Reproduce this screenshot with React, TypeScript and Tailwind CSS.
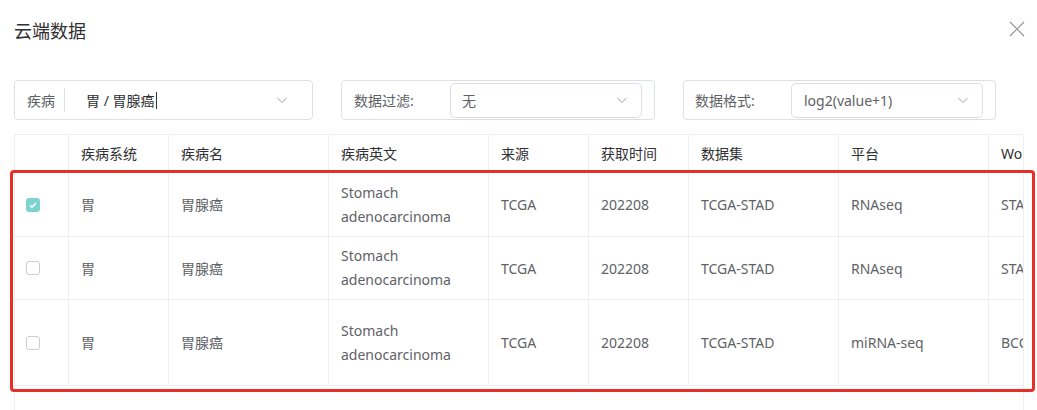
import React from 'react';

const FONT = { fontFamily: '"Noto Sans", "Noto Sans CJK SC", sans-serif' };

type Row = {
  checked: boolean;
  system: string;
  name: string;
  en: string[];
  source: string;
  time: string;
  dataset: string;
  platform: string;
  wo: string;
  h: string;
};

const ROWS: Row[] = [
  { checked: true, system: '胃', name: '胃腺癌', en: ['Stomach', 'adenocarcinoma'], source: 'TCGA', time: '202208', dataset: 'TCGA-STAD', platform: 'RNAseq', wo: 'STAD', h: 'h-[64px]' },
  { checked: false, system: '胃', name: '胃腺癌', en: ['Stomach', 'adenocarcinoma'], source: 'TCGA', time: '202208', dataset: 'TCGA-STAD', platform: 'RNAseq', wo: 'STAD', h: 'h-[63px]' },
  { checked: false, system: '胃', name: '胃腺癌', en: ['Stomach', 'adenocarcinoma'], source: 'TCGA', time: '202208', dataset: 'TCGA-STAD', platform: 'miRNA-seq', wo: 'BCGSC', h: 'h-[86px]' },
];

function Chevron() {
  return (
    <svg width="12" height="12" viewBox="0 0 12 12" fill="none" className="shrink-0">
      <path d="M1.5 4l4.5 4.5L10.5 4" stroke="#c0c4cc" strokeWidth="1.1" />
    </svg>
  );
}

function Checkbox({ checked }: { checked: boolean }) {
  if (checked) {
    return (
      <div className="w-[14px] h-[14px] rounded-[3px] bg-[#7dd3cf] flex items-center justify-center">
        <svg width="10" height="10" viewBox="0 0 10 10" fill="none">
          <path d="M2 5.2l2 2 4-4.2" stroke="#fff" strokeWidth="1.6" />
        </svg>
      </div>
    );
  }
  return <div className="w-[14px] h-[14px] rounded-[3px] border border-[#c8ccd4] bg-white" />;
}

const COLS = ['w-[54px]', 'w-[100px]', 'w-[160px]', 'w-[160px]', 'w-[100px]', 'w-[100px]', 'w-[150px]', 'w-[150px]', 'w-[150px]'];

function Cell({ w, children, last, first }: { w: string; children?: React.ReactNode; last?: boolean; first?: boolean }) {
  return (
    <div
      className={`${w} shrink-0 h-full flex items-center ${first ? 'pl-[11px]' : 'pl-[12px]'} ${last ? '' : 'border-r border-[#ebeef5]'}`}
    >
      {children}
    </div>
  );
}

export default function App() {
  return (
    <div className="relative w-[1037px] h-[410px] bg-white overflow-hidden" style={FONT}>
      {/* header */}
      <div className="flex items-center justify-between pl-[14px] pr-[12px] pt-[17px] h-[44px]">
        <span className="text-[18px] leading-[24px] text-[#303133]">云端数据</span>
        <svg width="16" height="16" viewBox="0 0 16 16" fill="none" className="-mt-[4px]">
          <path d="M1 1l14 14M15 1L1 15" stroke="#909399" strokeWidth="1.2" />
        </svg>
      </div>

      {/* filters */}
      <div className="flex pl-[14px] mt-[36px] gap-[28px] text-[14px]">
        <div className="w-[299px] h-[40px] border border-[#dcdfe6] rounded-[4px] flex items-center pl-[12px] pr-[24px]">
          <span className="text-[#606266]">疾病</span>
          <div className="w-px h-[24px] bg-[#dcdfe6] ml-[9px]" />
          <span className="ml-[21px] text-[#303133]">胃 / 胃腺癌</span>
          <span className="w-px h-[17px] bg-[#303133] ml-[1px]" />
          <div className="ml-auto"><Chevron /></div>
        </div>
        <div className="w-[314px] h-[40px] border border-[#dcdfe6] rounded-[4px] flex items-center pl-[12px] pr-[12px]">
          <span className="text-[#606266] w-[96px]">数据过滤:</span>
          <div className="w-[192px] h-[35px] border border-[#dcdfe6] rounded-[5px] flex items-center pl-[11px] pr-[13px]">
            <span className="text-[#606266]">无</span>
            <div className="ml-auto"><Chevron /></div>
          </div>
        </div>
        <div className="w-[313px] h-[40px] border border-[#dcdfe6] rounded-[4px] flex items-center pl-[11px] pr-[12px]">
          <span className="text-[#606266] w-[96px]">数据格式:</span>
          <div className="w-[192px] h-[35px] border border-[#dcdfe6] rounded-[5px] flex items-center pl-[12px] pr-[13px]">
            <span className="text-[#606266]">log2(value+1)</span>
            <div className="ml-auto"><Chevron /></div>
          </div>
        </div>
      </div>

      {/* table */}
      <div className="ml-[14px] mt-[14px] w-[1010px] h-[300px] border-l border-r border-t border-[#ebeef5] overflow-hidden text-[14px]">
        <div className="flex h-[38px] border-b border-[#ebeef5] text-[#303133] w-[1200px]">
          <Cell w={COLS[0]} first />
          <Cell w={COLS[1]}>疾病系统</Cell>
          <Cell w={COLS[2]}>疾病名</Cell>
          <Cell w={COLS[3]}>疾病英文</Cell>
          <Cell w={COLS[4]}>来源</Cell>
          <Cell w={COLS[5]}>获取时间</Cell>
          <Cell w={COLS[6]}>数据集</Cell>
          <Cell w={COLS[7]}>平台</Cell>
          <Cell w={COLS[8]} last>Workflow</Cell>
        </div>
        {ROWS.map((r, i) => (
          <div key={i} className={`flex ${r.h} border-b border-[#ebeef5] text-[#606266] w-[1200px]`}>
            <Cell w={COLS[0]} first><Checkbox checked={r.checked} /></Cell>
            <Cell w={COLS[1]}>{r.system}</Cell>
            <Cell w={COLS[2]}>{r.name}</Cell>
            <Cell w={COLS[3]}>
              <div className="leading-[24px]">
                <div>{r.en[0]}</div>
                <div>{r.en[1]}</div>
              </div>
            </Cell>
            <Cell w={COLS[4]}>{r.source}</Cell>
            <Cell w={COLS[5]}>{r.time}</Cell>
            <Cell w={COLS[6]}>{r.dataset}</Cell>
            <Cell w={COLS[7]}>{r.platform}</Cell>
            <Cell w={COLS[8]} last>{r.wo}</Cell>
          </div>
        ))}
      </div>

      {/* annotation */}
      <div className="absolute left-[10px] top-[170px] w-[1025px] h-[222px] border-[3px] border-[#e5302a] rounded-[4px] pointer-events-none" />
    </div>
  );
}
